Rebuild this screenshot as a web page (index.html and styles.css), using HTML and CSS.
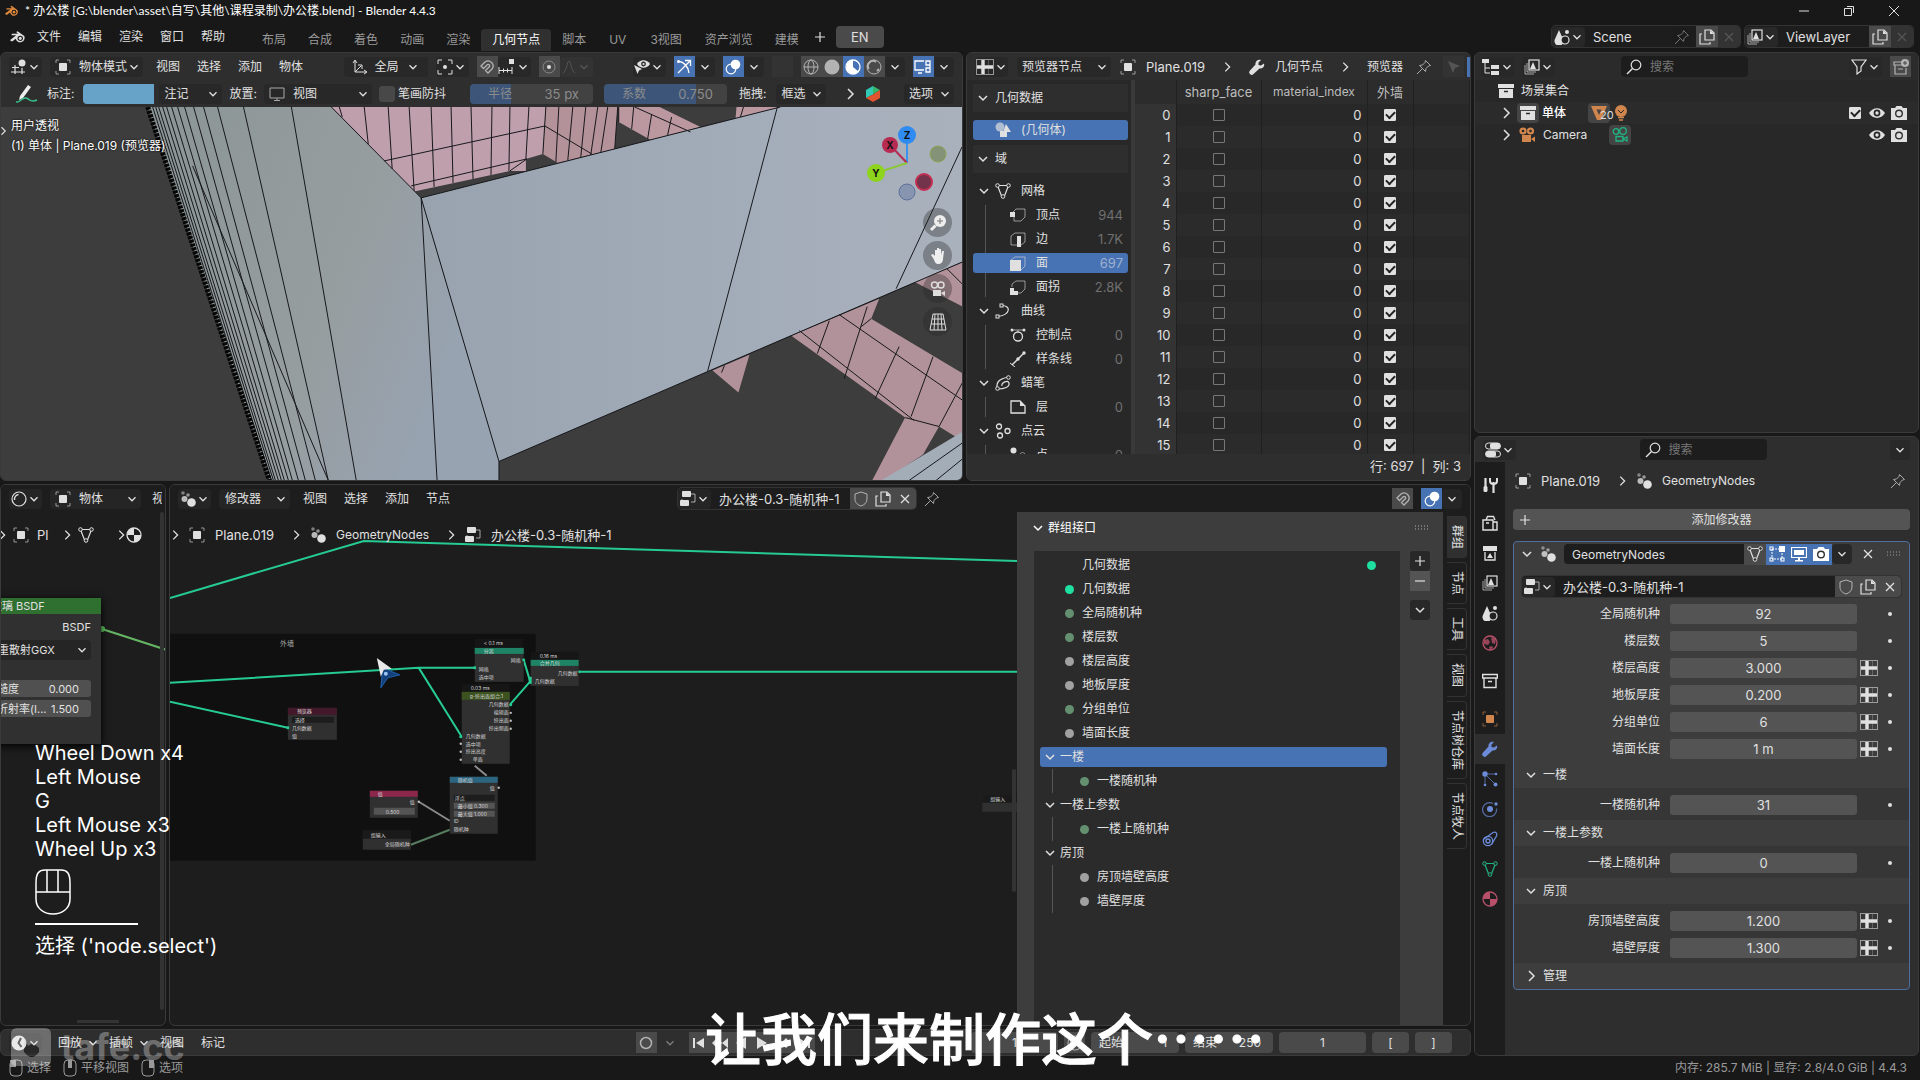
FILE: index.html
```html
<!DOCTYPE html>
<html lang="zh-CN">
<head>
    <meta charset="UTF-8">
    <meta name="viewport" content="width=device-width, initial-scale=1.0">
    <title>办公楼 - Blender 4.4.3</title>
    <link rel="stylesheet" href="styles.css">
</head>
<body>
    <!-- icon sprite -->
    <svg class="sprite" width="0" height="0">
        <symbol id="down" viewBox="0 0 16 16"><path d="M4 6l4 4 4-4" fill="none" stroke="currentColor" stroke-width="1.5"/></symbol>
        <symbol id="right" viewBox="0 0 16 16"><path d="M6 3l5 5-5 5" fill="none" stroke="currentColor" stroke-width="1.5"/></symbol>
        <symbol id="blender" viewBox="0 0 20 16"><path d="M1 11.500L8 6H3V4.500h7L8 2.500l1.500-1L17 7a5 5 0 1 1-9.500 3L3.500 13z" fill="currentColor"/><circle cx="12.500" cy="9.500" r="3" fill="#181818"/><circle cx="12.500" cy="9.500" r="1.700" fill="currentColor"/></symbol>
        <symbol id="object" viewBox="0 0 16 16"><rect x="4" y="4" width="8" height="8" rx="1" fill="currentColor"/><path d="M1 4V1h3M12 1h3v3M15 12v3h-3M4 15H1v-3" fill="none" stroke="currentColor" opacity=".6"/></symbol>
        <symbol id="pin" viewBox="0 0 16 16"><path d="M9.500 1.500l5 5-2 .5-2.500 2.500-.5 3-6-6 3-.500L9 3.500zM6 10l-5 5" fill="none" stroke="currentColor"/></symbol>
        <symbol id="view3d" viewBox="0 0 16 16"><circle cx="11" cy="4" r="3.500" fill="currentColor"/><path d="M4 6v9M11 9v6M1 8.500h7M0 13h14" fill="none" stroke="currentColor" stroke-width="1.200"/></symbol>
        <symbol id="orient" viewBox="0 0 16 16"><path d="M3 2v11h11M1 4l2-3 2 3M12 11l3 2-3 2M3 13l6-6M6 6h4v4" fill="none" stroke="currentColor"/></symbol>
        <symbol id="pivot" viewBox="0 0 16 16"><circle cx="8" cy="8" r="2" fill="currentColor"/><path d="M1 5V1h4M11 1h4v4M15 11v4h-4M5 15H1v-4" fill="none" stroke="currentColor"/></symbol>
        <symbol id="magnet" viewBox="0 0 16 16"><path d="M2 7l4-4a5 5 0 0 1 7 7l-4 4-2.500-2.500 4-4a1.500 1.500 0 0 0-2-2l-4 4z" fill="none" stroke="currentColor" stroke-width="1.300"/></symbol>
        <symbol id="increment" viewBox="0 0 18 16"><path d="M1 8v7M5.500 9.500v4M9.500 9.500v4M14 8v7M1 11.500h13" fill="none" stroke="currentColor"/><rect x="11" y="0" width="5" height="5" fill="currentColor"/></symbol>
        <symbol id="proportional" viewBox="0 0 16 16"><circle cx="8" cy="8" r="6" fill="none" stroke="currentColor" opacity=".4"/><circle cx="8" cy="8" r="2" fill="currentColor"/></symbol>
        <symbol id="falloff" viewBox="0 0 16 16"><path d="M2 14C6 12 6 2 8 2s2 10 6 12" fill="none" stroke="currentColor"/></symbol>
        <symbol id="eye" viewBox="0 0 16 16"><path d="M0 8c4-6.500 12-6.500 16 0-4 6.500-12 6.500-16 0z" fill="currentColor"/><circle cx="8" cy="8" r="3.400" fill="#282828"/><circle cx="8" cy="8" r="1.700" fill="currentColor"/></symbol>
        <symbol id="visible" viewBox="0 0 16 16"><path d="M3 5c3-5 10-5 13 0-3 5-10 5-13 0z" fill="currentColor"/><circle cx="9.500" cy="5" r="2.400" fill="#2d2d2d"/><circle cx="9.500" cy="5" r="1.100" fill="currentColor"/><path d="M0 6l8 4-3 1.500L3.500 15z" fill="currentColor"/></symbol>
        <symbol id="gizmo" viewBox="0 0 16 16"><path d="M2 2c6 1 10 5 11 12M2 14L14 2M9 1.500h5.500V7" fill="none" stroke="currentColor" stroke-width="1.300"/><circle cx="2.500" cy="2.500" r="1.500" fill="currentColor"/></symbol>
        <symbol id="overlay" viewBox="0 0 16 16"><circle cx="6" cy="10" r="4.800" fill="none" stroke="currentColor" stroke-width="1.200"/><circle cx="10.500" cy="5.500" r="4.800" fill="currentColor"/></symbol>
        <symbol id="wire" viewBox="0 0 16 16"><circle cx="8" cy="8" r="7" fill="none" stroke="currentColor"/><ellipse cx="8" cy="8" rx="3" ry="7" fill="none" stroke="currentColor"/><path d="M1 8h14" stroke="currentColor"/></symbol>
        <symbol id="solid" viewBox="0 0 16 16"><circle cx="8" cy="8" r="7.500" fill="currentColor"/></symbol>
        <symbol id="matprev" viewBox="0 0 16 16"><circle cx="8" cy="8" r="7" fill="none" stroke="currentColor" stroke-width="1.300"/><path d="M8 8V1a7 7 0 0 0-4.500 12z M8 8l5.500 4.500A7 7 0 0 1 3.500 13z" fill="currentColor"/></symbol>
        <symbol id="rendered" viewBox="0 0 16 16"><circle cx="8" cy="8" r="7" fill="none" stroke="currentColor"/><path d="M3 10a5 5 0 0 1 7-7M11 12l2-2" fill="none" stroke="currentColor" stroke-width="2"/></symbol>
        <symbol id="scrcam" viewBox="0 0 18 16"><path d="M10 2H1v9h9M4 14h4M12 2h4v4h-4zM12 9h4v4h-4zM16 6v3" fill="none" stroke="currentColor" stroke-width="1.300"/></symbol>
        <symbol id="pencil" viewBox="0 0 24 20"><path d="M5 12L13 1l3 2-8 11-4 2z" fill="#eee"/><path d="M1 18c4 1 6-5 10-4s4 5 11 2" fill="none" stroke="#3ac08c" stroke-width="1.500"/></symbol>
        <symbol id="screen" viewBox="0 0 16 16"><path d="M1 2h14v10H1zM5 14.500h6M8 12v2" fill="none" stroke="currentColor"/></symbol>
        <symbol id="sheet" viewBox="0 0 18 16"><rect x=".5" y=".5" width="17" height="15" fill="none" stroke="currentColor" opacity=".6"/><path d="M1 8h16M7 1v14" stroke="currentColor" stroke-width="3.400"/><path d="M12.500 1v14" stroke="currentColor" opacity=".25"/></symbol>
        <symbol id="wrench" viewBox="0 0 16 16"><path d="M15 4.500l-3 2-2.500-.500L9.500 3.500 12 1C8.500 0 6 2.500 6.500 5.500L1 11.500a2.300 2.300 0 0 0 3.500 3.500L10.500 9.500C13.500 10 16 7.500 15 4.500z" fill="currentColor"/></symbol>
        <symbol id="arrow" viewBox="0 0 16 16"><path d="M2 2l12 5-5 2-2 5z" fill="currentColor"/></symbol>
        <symbol id="geom" viewBox="0 0 16 16"><circle cx="5" cy="5" r="4.500" fill="currentColor" opacity=".7"/><path d="M11 2l5 8h-8z" fill="currentColor"/><rect x="5" y="9" width="7" height="6" fill="currentColor"/></symbol>
        <symbol id="mesh" viewBox="0 0 16 16"><path d="M2.500 2.500h11L9.500 13h-3z" fill="none" stroke="currentColor" stroke-width="1.200"/><g fill="#2a2a2a" stroke="currentColor"><circle cx="2.500" cy="2.500" r="1.800"/><circle cx="13.500" cy="2.500" r="1.800"/><circle cx="8" cy="13.500" r="1.800"/></g></symbol>
        <symbol id="meshobj" viewBox="0 0 16 16"><path d="M0 1h16L10 15H6z" fill="currentColor"/><path d="M5.500 4.500h5L8 10z" fill="#444"/></symbol>
        <symbol id="vert" viewBox="0 0 16 16"><path d="M3 5l3-3h9v8l-4 4H4V9" fill="none" stroke="currentColor" opacity=".6"/><rect x="0" y="5" width="5" height="5" fill="currentColor"/></symbol>
        <symbol id="edge" viewBox="0 0 16 16"><path d="M8 14H1V5l4-3h10v9l-4 3" fill="none" stroke="currentColor" opacity=".6"/><rect x="7" y="5" width="4" height="11" fill="currentColor"/></symbol>
        <symbol id="face" viewBox="0 0 16 16"><path d="M1 5l4-3h10v9l-4 4" fill="none" stroke="currentColor" opacity=".6"/><rect x="0" y="5" width="11" height="11" fill="currentColor"/></symbol>
        <symbol id="corner" viewBox="0 0 16 16"><path d="M2 8V5l4-3h9v8l-4 4H8" fill="none" stroke="currentColor" opacity=".6"/><path d="M0 9h4v3h4v4H0z" fill="currentColor"/></symbol>
        <symbol id="curve" viewBox="0 0 16 16"><path d="M7 2.500c9 0 9 9-4 11" fill="none" stroke="currentColor" stroke-width="1.200"/><g fill="#282828" stroke="currentColor"><rect x="5" y="1" width="3" height="3"/><rect x="1" y="12" width="3" height="3"/></g></symbol>
        <symbol id="ctrl" viewBox="0 0 16 16"><circle cx="8" cy="9.500" r="4.500" fill="none" stroke="currentColor" stroke-width="1.300"/><path d="M1 3h14M8 3v2" stroke="currentColor" opacity=".7"/><circle cx="2" cy="3" r="1.500" fill="currentColor"/><circle cx="14" cy="3" r="1.500" fill="currentColor"/></symbol>
        <symbol id="spline" viewBox="0 0 16 16"><path d="M2 14L14 2" stroke="currentColor" stroke-width="1.300"/><circle cx="14" cy="2" r="1.700" fill="currentColor"/><circle cx="8" cy="8" r="1.700" fill="currentColor"/><path d="M0 12l5 4" stroke="currentColor"/></symbol>
        <symbol id="grease" viewBox="0 0 16 16"><path d="M2 14C1 6 5 4 13 2M3 14c6 0 12-2 11-6s-8 0-7 3" fill="none" stroke="currentColor" stroke-width="1.200"/><circle cx="2.500" cy="13.500" r="1.800" fill="#282828" stroke="currentColor"/><circle cx="13.500" cy="2.500" r="1.800" fill="#282828" stroke="currentColor"/></symbol>
        <symbol id="layer" viewBox="0 0 16 16"><path d="M1 2h9l5 5v7H1z" fill="none" stroke="currentColor" stroke-width="1.300"/><path d="M10 2v5h5z" fill="currentColor"/></symbol>
        <symbol id="cloud" viewBox="0 0 16 16"><g fill="none" stroke="currentColor" stroke-width="1.300"><circle cx="4" cy="3.500" r="2.500"/><circle cx="12.500" cy="8" r="2.500"/><circle cx="5" cy="12.500" r="2.500"/></g></symbol>
        <symbol id="point" viewBox="0 0 16 16"><circle cx="3.500" cy="3.500" r="3" fill="currentColor"/><circle cx="12.500" cy="8" r="2.500" fill="none" stroke="currentColor" opacity=".5"/></symbol>
        <symbol id="scene" viewBox="0 0 16 16"><path d="M5 1l4 9a4.500 4.500 0 1 1-8 0z" fill="currentColor"/><circle cx="11" cy="11" r="4" fill="#222" stroke="currentColor" stroke-width="1.200"/><circle cx="13" cy="3" r="2" fill="currentColor"/></symbol>
        <symbol id="image" viewBox="0 0 16 16"><path d="M3 4v9h9M1 6v9h9" fill="none" stroke="currentColor" opacity=".7"/><rect x="5" y="1" width="10" height="10" fill="none" stroke="currentColor" stroke-width="1.200"/><path d="M6 10l3-7 3 7z" fill="currentColor"/></symbol>
        <symbol id="copy" viewBox="0 0 16 16"><path d="M6 1h6l3 3v7H6zM3 5H1v10h10v-2" fill="none" stroke="currentColor" stroke-width="1.200"/><path d="M11 1v4h4z" fill="currentColor"/></symbol>
        <symbol id="close" viewBox="0 0 16 16"><path d="M4 4l8 8M12 4l-8 8" stroke="currentColor" stroke-width="1.300"/></symbol>
        <symbol id="plus" viewBox="0 0 16 16"><path d="M8 3v10M3 8h10" stroke="currentColor" stroke-width="1.200"/></symbol>
        <symbol id="minus" viewBox="0 0 16 16"><path d="M3 8h10" stroke="currentColor" stroke-width="1.200"/></symbol>
        <symbol id="tree" viewBox="0 0 18 16"><path d="M3 3v11h5M3 9h5" fill="none" stroke="currentColor"/><rect x="0" y="0" width="7" height="4" fill="currentColor"/><rect x="9" y="6" width="8" height="4" fill="currentColor"/><rect x="9" y="12" width="8" height="4" fill="currentColor"/></symbol>
        <symbol id="search" viewBox="0 0 16 16"><circle cx="10" cy="6" r="4.800" fill="none" stroke="currentColor" stroke-width="1.200"/><path d="M6.500 9.500L1 15" stroke="currentColor" stroke-width="1.500"/></symbol>
        <symbol id="funnel" viewBox="0 0 16 16"><path d="M1 1h14l-5 7v4l-4 3V8z" fill="none" stroke="currentColor" stroke-width="1.200"/></symbol>
        <symbol id="collection" viewBox="0 0 16 16"><path d="M0 1h16v4H0zM1 6h14v9H1z" fill="currentColor"/><path d="M6 8.500h4" stroke="#282828" stroke-width="1.500"/></symbol>
        <symbol id="newcoll" viewBox="0 0 16 16"><path d="M9 3H1v3h10M2 6v9h11V9M5 10h5" fill="none" stroke="currentColor" stroke-width="1.200"/><circle cx="12" cy="4" r="4" fill="currentColor"/><path d="M12 2v4M10 4h4" stroke="#444"/></symbol>
        <symbol id="box" viewBox="0 0 16 16"><path d="M.7 1.500h14.600v3.500H.7zM2 5h12v9.500H2zM6 8.500h4" fill="none" stroke="currentColor" stroke-width="1.400"/></symbol>
        <symbol id="cam" viewBox="0 0 16 16"><path d="M0 3h4l1.500-2h5L12 3h4v12H0z" fill="currentColor"/><circle cx="8" cy="8.500" r="4" fill="#333"/><circle cx="8" cy="8.500" r="2.600" fill="currentColor"/></symbol>
        <symbol id="movie" viewBox="0 0 16 16"><circle cx="4" cy="4" r="3.600" fill="currentColor"/><circle cx="11.500" cy="4" r="3.600" fill="currentColor"/><path d="M3 8h9v7H3zM12 12l4-2.500V15z" fill="currentColor"/><circle cx="4" cy="4" r="1.300" fill="#282828"/><circle cx="11.500" cy="4" r="1.300" fill="#282828"/></symbol>
        <symbol id="camdata" viewBox="0 0 16 16"><g fill="none" stroke="currentColor" stroke-width="1.300"><circle cx="4" cy="4.500" r="2.800"/><circle cx="11" cy="4" r="3.300"/><path d="M4 9.500h7V14H4zM11 12l4-2v4z"/></g></symbol>
        <symbol id="bulb" viewBox="0 0 16 16"><circle cx="8" cy="6" r="6" fill="currentColor"/><path d="M5 12.500h6M6 15h4" stroke="currentColor" stroke-width="1.500"/><path d="M5 5l3 3 3-3" fill="none" stroke="#282828"/></symbol>
        <symbol id="props" viewBox="0 0 16 16"><rect x=".5" y="1" width="15" height="6" rx="3" fill="none" stroke="currentColor"/><rect x="5" y="1" width="10" height="6" rx="2" fill="currentColor"/><rect x=".5" y="9" width="15" height="6" rx="3" fill="none" stroke="currentColor"/><rect x="1" y="9" width="10" height="6" rx="2" fill="currentColor"/></symbol>
        <symbol id="gnodes" viewBox="0 0 16 16"><circle cx="3" cy="2" r="1.800" fill="currentColor" opacity=".5"/><circle cx="8" cy="4" r="1.800" fill="currentColor" opacity=".6"/><circle cx="4.500" cy="8" r="3" fill="currentColor" opacity=".8"/><circle cx="11.500" cy="11.500" r="4.300" fill="currentColor"/></symbol>
        <symbol id="nodetree" viewBox="0 0 16 16"><path d="M11 3h4v8h-4M2 8v5" fill="none" stroke="currentColor" opacity=".7"/><rect x="2" y="0" width="9" height="6" rx="1" fill="currentColor"/><rect x="0" y="9" width="9" height="6" rx="1" fill="currentColor"/></symbol>
        <symbol id="shield" viewBox="0 0 16 16"><path d="M8 1l6 2v5c0 4-3 6-6 7-3-1-6-3-6-7V3z" fill="none" stroke="currentColor"/></symbol>
        <symbol id="sphere" viewBox="0 0 16 16"><circle cx="8" cy="8" r="7" fill="none" stroke="currentColor" stroke-width="1.200"/><path d="M3.500 9a5 5 0 0 1 4-5.500" fill="none" stroke="currentColor" stroke-width="1.500"/></symbol>
        <symbol id="material" viewBox="0 0 16 16"><circle cx="8" cy="8" r="7" fill="none" stroke="currentColor" stroke-width="1.300"/><path d="M8 8V1a7 7 0 0 0-7 7zM8 8v7a7 7 0 0 0 7-7z" fill="currentColor"/></symbol>
        <symbol id="tool" viewBox="0 0 16 16"><path d="M3.500 1v9M11.500 5v11" stroke="currentColor" stroke-width="2.200"/><rect x="1.500" y="9" width="4" height="6" rx="1.500" fill="currentColor"/><path d="M8 1v3c0 4 7 4 7 0V1" fill="none" stroke="currentColor" stroke-width="2"/></symbol>
        <symbol id="render" viewBox="0 0 16 16"><path d="M1 5h10v10H1zM11 7h4v8h-4M4 5l1.500-3.500h6L13 5" fill="none" stroke="currentColor" stroke-width="1.400"/><path d="M4 8h3" stroke="currentColor" stroke-width="1.500"/></symbol>
        <symbol id="output" viewBox="0 0 16 16"><path d="M1 1h14v5H1z" fill="currentColor"/><path d="M3 7v8h10V7" fill="none" stroke="currentColor" stroke-width="1.300"/><path d="M5 13l3-5 3 5z" fill="currentColor"/></symbol>
        <symbol id="world" viewBox="0 0 16 16"><circle cx="8" cy="8" r="7" fill="none" stroke="currentColor" stroke-width="1.300"/><path d="M2 5l4-1 2 3-2 3-4-1zM9 2l5 2-1 5-3-1zM7 12l3-1 1 2-3 2z" fill="currentColor" opacity=".8"/></symbol>
        <symbol id="particles" viewBox="0 0 16 16"><circle cx="3" cy="3" r="2.700" fill="currentColor"/><path d="M3 3h11M3 3v11M3 3l11 11" stroke="currentColor" opacity=".7"/><circle cx="14" cy="3" r="1.300" fill="currentColor"/><circle cx="3" cy="14" r="1.300" fill="currentColor"/><circle cx="13.500" cy="13.500" r="2" fill="currentColor"/></symbol>
        <symbol id="physics" viewBox="0 0 16 16"><path d="M11 2.500a7 7 0 1 0 3.500 5" fill="none" stroke="currentColor" opacity=".7" stroke-width="1.300"/><circle cx="8" cy="8" r="3" fill="currentColor"/><circle cx="14" cy="3" r="1.700" fill="currentColor"/></symbol>
        <symbol id="constraint" viewBox="0 0 16 16"><path d="M2 8L11 1.500c3-1 4.500 1 3.500 3.500l-5 8.500" fill="none" stroke="currentColor" stroke-width="1.300"/><circle cx="6" cy="10" r="4.700" fill="none" stroke="currentColor" stroke-width="1.300"/><circle cx="6" cy="10" r="2" fill="none" stroke="currentColor" stroke-width="1.400"/></symbol>
        <symbol id="editmode" viewBox="0 0 16 16"><path d="M3 3h8M3 3v10h10V7" fill="none" stroke="currentColor" stroke-dasharray="2 1"/><rect x="10" y="0" width="6" height="6" fill="currentColor"/><g fill="none" stroke="currentColor"><rect x="1" y="1" width="3" height="3"/><rect x="1" y="12" width="3" height="3"/><rect x="12" y="12" width="3" height="3"/></g></symbol>
        <symbol id="monitor" viewBox="0 0 16 16"><path d="M.5 1.500h15v10H.5z" fill="none" stroke="currentColor" stroke-width="1.200"/><path d="M3 4h10v5H3zM7 12h2v2h3v1.500H4V14h3z" fill="currentColor"/></symbol>
        <symbol id="grip" viewBox="0 0 16 8"><path d="M1 2h14M1 5h14" stroke="currentColor" stroke-width="1.200" stroke-dasharray="1 2"/></symbol>
        <symbol id="clock" viewBox="0 0 16 16"><circle cx="8" cy="8" r="7.500" fill="currentColor"/><path d="M10 3L7.500 8l3 4" fill="none" stroke="#222" stroke-width="2"/></symbol>
        <symbol id="mouse-l" viewBox="0 0 14 18"><rect x="1" y="1" width="12" height="16" rx="4" fill="none" stroke="currentColor"/><path d="M1 1h6v7H1z" fill="currentColor"/></symbol>
        <symbol id="mouse-m" viewBox="0 0 14 18"><rect x="1" y="1" width="12" height="16" rx="4" fill="none" stroke="currentColor"/><path d="M5 1h4v8H5z" fill="currentColor"/></symbol>
        <symbol id="mouse-r" viewBox="0 0 14 18"><rect x="1" y="1" width="12" height="16" rx="4" fill="none" stroke="currentColor"/><path d="M8 1h5v8H8z" fill="currentColor"/></symbol>
    </svg>

    <header class="titlebar">
        <svg class="ic logo"><use href="#blender"/></svg>
        <span class="title">* 办公楼 [G:\blender\asset\自写\其他\课程录制\办公楼.blend] - Blender 4.4.3</span>
        <div class="window-buttons">
            <button aria-label="最小化"><svg viewBox="0 0 12 12"><path d="M1 6h10" stroke="currentColor"/></svg></button>
            <button aria-label="还原"><svg viewBox="0 0 12 12"><path d="M1.500 3.500h7v7h-7zM4 1.500h6.500V8" fill="none" stroke="currentColor"/></svg></button>
            <button aria-label="关闭"><svg viewBox="0 0 12 12"><path d="M1 1l10 10M11 1L1 11" stroke="currentColor"/></svg></button>
        </div>
    </header>

    <nav class="topbar">
        <svg class="ic wide"><use href="#blender"/></svg>
        <div class="menus">
            <button>文件</button><button>编辑</button><button>渲染</button><button>窗口</button><button>帮助</button>
        </div>
        <div class="tabs">
            <button>布局</button><button>合成</button><button>着色</button><button>动画</button><button>渲染</button>
            <button class="active">几何节点</button><button>脚本</button><button class="lat">UV</button><button class="lat">3视图</button>
            <button>资产浏览</button><button>建模</button>
        </div>
        <button class="flat add-tab" aria-label="添加工作区"><svg class="ic"><use href="#plus"/></svg></button>
        <button class="lang lat">EN</button>
        <div class="datablocks">
            <div class="datablock">
                <button class="drop"><svg class="ic"><use href="#scene"/></svg><svg class="chev"><use href="#down"/></svg></button>
                <input class="lat" type="text" value="Scene" aria-label="场景">
                <svg class="ic dim"><use href="#pin"/></svg>
                <button class="tool"><svg class="ic"><use href="#copy"/></svg></button>
                <button class="tool off"><svg class="ic"><use href="#close"/></svg></button>
            </div>
            <div class="datablock layer">
                <button class="drop"><svg class="ic"><use href="#image"/></svg><svg class="chev"><use href="#down"/></svg></button>
                <input class="lat" type="text" value="ViewLayer" aria-label="视图层">
                <button class="tool"><svg class="ic"><use href="#copy"/></svg></button>
                <button class="tool off"><svg class="ic"><use href="#close"/></svg></button>
            </div>
        </div>
    </nav>

    <main class="workspace">
        <div class="column-main">
            <div class="row-top">
                <!-- 3D viewport -->
                <section class="area viewport">
                    <div class="bar spread">
                        <div class="group">
                            <button class="drop"><svg class="ic"><use href="#view3d"/></svg><svg class="chev"><use href="#down"/></svg></button>
                            <label class="select mode"><svg class="ic"><use href="#object"/></svg><select aria-label="模式"><option>物体模式</option></select><svg class="chev"><use href="#down"/></svg></label>
                            <div class="menus"><button>视图</button><button>选择</button><button>添加</button><button>物体</button></div>
                        </div>
                        <div class="group tight">
                            <button class="drop wide-drop"><svg class="ic"><use href="#orient"/></svg>全局<svg class="chev"><use href="#down"/></svg></button>
                            <button class="drop"><svg class="ic"><use href="#pivot"/></svg><svg class="chev"><use href="#down"/></svg></button>
                            <div class="joined">
                                <button class="tool"><svg class="ic soft"><use href="#magnet"/></svg></button>
                                <button class="drop"><svg class="ic wide"><use href="#increment"/></svg><svg class="chev"><use href="#down"/></svg></button>
                            </div>
                            <div class="joined">
                                <button class="tool"><svg class="ic"><use href="#proportional"/></svg></button>
                                <button class="drop off"><svg class="ic"><use href="#falloff"/></svg><svg class="chev"><use href="#down"/></svg></button>
                            </div>
                        </div>
                        <div class="group tight">
                            <button class="drop"><svg class="ic"><use href="#visible"/></svg><svg class="chev"><use href="#down"/></svg></button>
                            <div class="joined"><button class="tool on"><svg class="ic"><use href="#gizmo"/></svg></button><button class="drop slim"><svg class="chev"><use href="#down"/></svg></button></div>
                            <div class="joined"><button class="tool on"><svg class="ic"><use href="#overlay"/></svg></button><button class="drop slim"><svg class="chev"><use href="#down"/></svg></button></div>
                            <button class="tool off" aria-label="透视模式"></button>
                            <div class="joined">
                                <button class="tool"><svg class="ic soft"><use href="#wire"/></svg></button>
                                <button class="tool"><svg class="ic soft"><use href="#solid"/></svg></button>
                                <button class="tool on"><svg class="ic"><use href="#matprev"/></svg></button>
                                <button class="tool"><svg class="ic soft"><use href="#rendered"/></svg></button>
                                <button class="drop slim"><svg class="chev"><use href="#down"/></svg></button>
                            </div>
                            <div class="joined"><button class="tool on"><svg class="ic wide"><use href="#scrcam"/></svg></button><button class="drop slim"><svg class="chev"><use href="#down"/></svg></button></div>
                        </div>
                    </div>
                    <div class="bar settings">
                        <svg class="pencil"><use href="#pencil"/></svg>
                        <label for="noteColor">标注:</label>
                        <button class="swatch" id="noteColor" aria-label="颜色"></button>
                        <label class="select note"><select aria-label="注记"><option>注记</option></select><svg class="chev"><use href="#down"/></svg></label>
                        <label for="placement">放置:</label>
                        <label class="select place"><svg class="ic soft"><use href="#screen"/></svg><select id="placement"><option>视图</option></select><svg class="chev"><use href="#down"/></svg></label>
                        <label class="check-label"><input type="checkbox" class="box-check">笔画防抖</label>
                        <label class="slider radius"><span>半径</span><input class="lat" type="text" value="35 px"></label>
                        <label class="slider factor"><span>系数</span><input class="lat" type="text" value="0.750"></label>
                        <label for="drag">拖拽:</label>
                        <label class="select drag"><select id="drag"><option>框选</option></select><svg class="chev"><use href="#down"/></svg></label>
                        <svg class="ic push"><use href="#right"/></svg>
                        <svg class="ic" viewBox="0 0 16 16"><path d="M8 0l7 4-7 4.500z" fill="#35b56a"/><path d="M8 0L1 4v8l7-3.500z" fill="#2fc9b5"/><path d="M1 12l7 4 7-4V4L8 8.500z" fill="#e0552f"/></svg>
                        <label class="select options"><select aria-label="选项"><option>选项</option></select><svg class="chev"><use href="#down"/></svg></label>
                    </div>
                    <div class="scene">
                        <svg class="scene-art" viewBox="0 0 963 374" preserveAspectRatio="none">
                            <defs>
                                <linearGradient id="side" x1="0" x2="1" y1="0" y2=".4"><stop offset="0" stop-color="#8b9596"/><stop offset=".6" stop-color="#969d9e"/><stop offset="1" stop-color="#98a3b2"/></linearGradient>
                                <linearGradient id="front" x1="0" x2="1"><stop offset="0" stop-color="#98a3af"/><stop offset=".5" stop-color="#a1abb8"/><stop offset="1" stop-color="#a9b1bc"/></linearGradient>
                            </defs>
                            <rect width="963" height="374" fill="#3d3d3d"/>
                            <path d="M331 0H546L543 47 526 52V64L510 64 413 85z" fill="#bf9fac"/>
                            <path d="M546 0H618L615 42 558 56 543 47z" fill="#b49299"/>
                            <path d="M619 0h41l41 20-50 13-32-18zM737 0h46l-47 12z" fill="#bb98a0"/>
                            <path d="M792 229L880 192 872 212 964 267V335L940 320 906 311zM906 311L940 320 924 348 885 374H873zM713 264L750 248 739 286zM915 175L964 155V200z" fill="#b2929a"/>
                            <path d="M147 0H331L421 91 499 355V374H269z" fill="url(#side)"/>
                            <path d="M421 91L781 0H963V155L708 265 499 355z" fill="url(#front)"/>
                            <path d="M882 374L964 325V374z" fill="#a3adb8"/>
                            <g fill="none" stroke="#16181b" stroke-width="1">
                                <path d="M331 0L421 91 499 355V374M421 91L781 0M421 91L437 374M778 0L708 265M963 40L897 182M499 355L708 265 964 155"/>
                                <path d="M291 0L356 374M243 0L328 374M217 0L315 374M203 0L305 374M193 0L298 374M184 0L292 374M177 0L288 374M171 0L284 374M166 0L281 374M162 0L278 374M158 0L275 374M155 0L273 374M152 0L271 374M192 59L328 374"/>
                                <path d="M339 0L342 10M364 0L368 37M388 0L392 62M409 0L414 84M431 0L434 80M451 0L453 76M471 0L473 72M492 0L491 68M510 0L509 64M529 0L526 52M546 0L543 47M559 0L556 55M573 0L568 53M586 0L581 50M598 0L591 48M608 0L601 46M618 0L615 42"/>
                                <path d="M384 54L545 19 592 47M411 79L527 52 510 64M635 0L691 25M619 0L619 15M634 0L632 22M652 7L648 32M672 10L668 28M744 0L741 10"/>
                                <path d="M800 224L915 314M840 208L964 294M830 214L818 247M868 200L845 272M900 240L876 292M934 250L912 310M964 275L940 320M872 212L862 220M906 311L940 320M725 259L722 266M948 162L964 178M910 374L964 336M937 374L964 352"/>
                            </g>
                            <path d="M147 0L269 374" stroke="#060606" stroke-width="5" stroke-dasharray="3 1"/>
                        </svg>
                        <p class="view-info">用户透视<br>(1) 单体 | Plane.019 (预览器)</p>
                        <svg class="edge-mark"><use href="#right"/></svg>
                        <div class="nav-gizmo">
                            <svg width="100" height="90" viewBox="860 15 100 90">
                                <path d="M908 55V27" stroke="#3b93f0" stroke-width="2"/><path d="M908 55L891 37" stroke="#b72b52" stroke-width="2"/><path d="M908 55L877 65" stroke="#8cc63b" stroke-width="2"/>
                                <circle cx="908" cy="27" r="9" fill="#2f8bf0"/><circle cx="891" cy="37" r="8" fill="#b72b52"/><circle cx="877" cy="65" r="9" fill="#8ed31c"/>
                                <circle cx="939" cy="46" r="8" fill="#849377" stroke="#8aa655"/><circle cx="925" cy="74" r="8" fill="#73334a" stroke="#c32e52" stroke-width="2"/><circle cx="908" cy="84" r="8" fill="#8795b0" stroke="#5e719c"/>
                                <g font-size="10" font-weight="700" text-anchor="middle" fill="#111"><text x="908" y="31">Z</text><text x="891" y="41">X</text><text x="877" y="69">Y</text></g>
                            </svg>
                        </div>
                        <div class="nav-tools">
                            <button aria-label="缩放"><svg viewBox="0 0 20 20"><circle cx="12" cy="8" r="6" fill="#eee"/><path d="M7.500 12.500L3 17" stroke="#eee" stroke-width="3"/><path d="M9 8h6M12 5v6" stroke="#777"/></svg></button>
                            <button aria-label="平移"><svg viewBox="0 0 20 20"><path d="M5 12L3 9l2-1 2 2V4h2v5V2h2v7V3h2v6l1-4h2l-1 8c0 3-2 5-5 5s-3-3-5-6z" fill="#eee"/></svg></button>
                            <button aria-label="摄像机"><svg viewBox="0 0 20 20"><circle cx="6.500" cy="6" r="3" fill="none" stroke="#ddd" stroke-width="1.500"/><circle cx="13" cy="6" r="3" fill="none" stroke="#ddd" stroke-width="1.500"/><path d="M5 11h8v6H5zM13 14l4-2v5z" fill="#ddd"/></svg></button>
                            <button aria-label="正交"><svg viewBox="0 0 20 20"><path d="M5 2h10l3 16H2zM10 2v16M7 2L6 18M13 2l1 16M4 7h12M3 12h14" fill="none" stroke="#ddd"/></svg></button>
                        </div>
                    </div>
                </section>

                <!-- spreadsheet -->
                <section class="area spreadsheet">
                    <div class="bar">
                        <button class="drop"><svg class="ic wide"><use href="#sheet"/></svg><svg class="chev"><use href="#down"/></svg></button>
                        <label class="select viewer-select"><select aria-label="显示"><option>预览器节点</option></select><svg class="chev"><use href="#down"/></svg></label>
                        <div class="crumbs">
                            <svg class="ic"><use href="#object"/></svg><span class="lat">Plane.019</span>
                            <svg class="sep"><use href="#right"/></svg>
                            <svg class="ic"><use href="#wrench"/></svg><span>几何节点</span>
                            <svg class="sep"><use href="#right"/></svg><span>预览器</span>
                            <svg class="ic soft"><use href="#pin"/></svg>
                        </div>
                        <button class="tool off push"><svg class="ic"><use href="#arrow"/></svg></button>
                        <i class="clipped-toggle"></i>
                    </div>
                    <div class="sheet-body">
                        <div class="dataset">
                            <button class="panel-title"><svg class="ic"><use href="#down"/></svg>几何数据</button>
                            <button class="tree-item selected root"><svg class="ic"><use href="#geom"/></svg>(几何体)</button>
                            <button class="panel-title second"><svg class="ic"><use href="#down"/></svg>域</button>
                            <div class="domain-tree">
                                <button class="tree-head"><svg class="ic"><use href="#down"/></svg><svg class="ic"><use href="#mesh"/></svg>网格</button>
                                <div class="branch">
                                    <button class="tree-item"><svg class="ic"><use href="#vert"/></svg>顶点<span class="lat">944</span></button>
                                    <button class="tree-item"><svg class="ic"><use href="#edge"/></svg>边<span class="lat">1.7K</span></button>
                                    <button class="tree-item selected"><svg class="ic"><use href="#face"/></svg>面<span class="lat">697</span></button>
                                    <button class="tree-item"><svg class="ic"><use href="#corner"/></svg>面拐<span class="lat">2.8K</span></button>
                                </div>
                                <button class="tree-head"><svg class="ic"><use href="#down"/></svg><svg class="ic"><use href="#curve"/></svg>曲线</button>
                                <div class="branch">
                                    <button class="tree-item"><svg class="ic"><use href="#ctrl"/></svg>控制点<span class="lat">0</span></button>
                                    <button class="tree-item"><svg class="ic"><use href="#spline"/></svg>样条线<span class="lat">0</span></button>
                                </div>
                                <button class="tree-head"><svg class="ic"><use href="#down"/></svg><svg class="ic"><use href="#grease"/></svg>蜡笔</button>
                                <div class="branch">
                                    <button class="tree-item"><svg class="ic"><use href="#layer"/></svg>层<span class="lat">0</span></button>
                                </div>
                                <button class="tree-head"><svg class="ic"><use href="#down"/></svg><svg class="ic"><use href="#cloud"/></svg>点云</button>
                                <div class="branch">
                                    <button class="tree-item"><svg class="ic"><use href="#point"/></svg>点<span class="lat">0</span></button>
                                </div>
                            </div>
                        </div>
                        <div class="table-wrap">
                            <table class="lat">
                                <thead><tr><th class="col-index"></th><th class="col-sharp">sharp_face</th><th class="col-mat">material_index</th><th class="col-wall">外墙</th><th></th></tr></thead>
                                <tbody id="sheetRows"></tbody>
                            </table>
                        </div>
                    </div>
                    <div class="sheet-footer lat">行: 697 &nbsp;|&nbsp; 列: 3</div>
                </section>
            </div>

            <div class="row-nodes">
                <!-- shader editor -->
                <section class="area shader">
                    <div class="bar">
                        <button class="drop"><svg class="ic"><use href="#sphere"/></svg><svg class="chev"><use href="#down"/></svg></button>
                        <label class="select shader-type"><svg class="ic"><use href="#object"/></svg><select aria-label="着色器类型"><option>物体</option></select><svg class="chev"><use href="#down"/></svg></label>
                        <div class="menus"><button>视图</button></div>
                    </div>
                    <div class="shader-canvas">
                        <div class="crumbs">
                            <svg class="sep"><use href="#right"/></svg><svg class="ic"><use href="#object"/></svg><span class="lat">Pl</span>
                            <svg class="sep"><use href="#right"/></svg><svg class="ic"><use href="#mesh"/></svg>
                            <svg class="sep last"><use href="#right"/></svg><svg class="ic"><use href="#material"/></svg>
                        </div>
                        <svg class="links"><path d="M101 117L166 138" stroke="#65b564" stroke-width="2"/><circle cx="101" cy="117" r="3" fill="#63d163"/></svg>
                        <div class="bsdf-node">
                            <div class="node-title">玻璃 BSDF</div>
                            <div class="node-out">BSDF</div>
                            <label class="select"><select aria-label="分布"><option>多重散射GGX</option></select><svg class="chev"><use href="#down"/></svg></label>
                            <label class="node-field"><span>糙度</span><input type="text" value="0.000"></label>
                            <label class="node-field"><span>折射率(I...</span><input type="text" value="1.500"></label>
                        </div>
                        <i class="hscroll"></i>
                        <i class="vscroll"></i>
                    </div>
                </section>

                <!-- geometry node editor -->
                <section class="area nodes">
                    <div class="bar">
                        <button class="drop"><svg class="ic"><use href="#gnodes"/></svg><svg class="chev"><use href="#down"/></svg></button>
                        <label class="select tree-type"><select aria-label="节点树类型"><option>修改器</option></select><svg class="chev"><use href="#down"/></svg></label>
                        <div class="menus"><button>视图</button><button>选择</button><button>添加</button><button>节点</button></div>
                        <div class="datablock tree-block">
                            <button class="drop"><svg class="ic"><use href="#nodetree"/></svg><svg class="chev"><use href="#down"/></svg></button>
                            <input class="lat" type="text" value="办公楼-0.3-随机种-1" aria-label="节点组">
                            <button class="tool"><svg class="ic soft"><use href="#shield"/></svg></button>
                            <button class="tool"><svg class="ic"><use href="#copy"/></svg></button>
                            <button class="tool"><svg class="ic"><use href="#close"/></svg></button>
                        </div>
                        <svg class="ic soft"><use href="#pin"/></svg>
                        <button class="tool push"><svg class="ic soft"><use href="#magnet"/></svg></button>
                        <div class="joined"><button class="tool on"><svg class="ic"><use href="#overlay"/></svg></button><button class="drop slim"><svg class="chev"><use href="#down"/></svg></button></div>
                    </div>
                    <div class="nodes-body">
                        <div class="node-canvas">
                            <svg class="graph" viewBox="171 512 848 513" preserveAspectRatio="xMinYMin slice">
                                <rect x="171" y="634" width="366" height="227" fill="#101010"/>
                                <text x="281" y="646" font-size="7" fill="#aaa">外墙</text>
                                <g fill="none" stroke="#26cb94" stroke-width="2">
                                    <path d="M171 598L365 541 1019 561M171 683L420 668H476M420 668L463 737M171 702L289 728M582 672H1019M525 660L531 680M511 705L532 681"/>
                                </g>
                                <path d="M476 766L488 776M420 802L451 821" stroke="#8a8a8a" stroke-width="2"/><path d="M412 845L451 830" stroke="#567c5f" stroke-width="2"/>
                                <!-- timings -->
                                <g fill="#161616"><rect x="476" y="639" width="48" height="8"/><rect x="532" y="652" width="48" height="8"/><rect x="463" y="684" width="48" height="8"/></g>
                                <g fill="#303030">
                                    <rect x="289" y="708" width="49" height="32"/><rect x="476" y="648" width="49" height="34"/><rect x="532" y="660" width="48" height="26"/>
                                    <rect x="463" y="692" width="48" height="72"/><rect x="451" y="777" width="48" height="57"/><rect x="371" y="791" width="48" height="27"/><rect x="364" y="831" width="48" height="19"/><rect x="984" y="795" width="35" height="17"/>
                                </g>
                                <rect x="289" y="708" width="49" height="7" fill="#43182a"/><rect x="476" y="648" width="49" height="6" fill="#1f8465"/><rect x="532" y="660" width="48" height="6" fill="#1f8465"/>
                                <rect x="463" y="692" width="48" height="8" fill="#3c521f"/><rect x="451" y="777" width="48" height="6" fill="#2b6580"/><rect x="371" y="791" width="48" height="6" fill="#8c264b"/><path d="M364 831h48v8h-48zM984 795h35v8h-35z" fill="#1a1a1a"/>
                                <g fill="#1d1d1d"><rect x="293" y="717" width="42" height="6"/><rect x="455" y="795" width="41" height="6"/></g>
                                <g fill="#545454"><rect x="455" y="803" width="41" height="6"/><rect x="455" y="811" width="41" height="6"/><rect x="375" y="808" width="41" height="7"/></g>
                                <g font-size="5" fill="#d5d5d5">
                                    <text x="298" y="713">预览器</text><text x="296" y="722">选择</text><text x="293" y="730">几何数据</text><text x="293" y="738">值</text>
                                    <text x="485" y="645">&lt; 0.1 ms</text><text x="485" y="653">分离</text><text x="512" y="662">网格</text><text x="480" y="671">网格</text><text x="480" y="679">选中项</text>
                                    <text x="541" y="658">0.16 ms</text><text x="541" y="665">合并几何</text><text x="559" y="675">几何数据</text><text x="536" y="683">几何数据</text>
                                    <text x="472" y="690">0.03 ms</text><text x="471" y="698">g-挤出面组合.1</text><text x="490" y="706">几何数据</text><text x="495" y="714">编辑面</text><text x="495" y="722">挤出面</text><text x="490" y="730">挤出侧面</text><text x="467" y="738">几何数据</text><text x="467" y="746">选中项</text><text x="467" y="753">挤出高度</text><text x="474" y="761">单面</text>
                                    <text x="459" y="782">随机值</text><text x="491" y="790">值</text><text x="456" y="800">浮点</text><text x="459" y="808">最小值 0.300</text><text x="459" y="816">最大值 1.000</text><text x="455" y="823">ID</text><text x="455" y="831">随机种</text>
                                    <text x="379" y="796">值</text><text x="411" y="804">值</text><text x="387" y="814">0.500</text><text x="372" y="837">组输入</text><text x="386" y="846">全局随机种</text><text x="992" y="801">组输入</text>
                                </g>
                                <g fill="#26cb94"><circle cx="289" cy="728" r="1.500"/><circle cx="476" cy="668" r="1.500"/><circle cx="525" cy="660" r="1.500"/><circle cx="581" cy="672" r="1.500"/><circle cx="462" cy="737" r="1.500"/><circle cx="512" cy="705" r="1.500"/><rect x="530" y="677" width="3" height="7"/></g>
                                <g fill="#bbb"><circle cx="512" cy="713" r="1.200"/><circle cx="512" cy="721" r="1.200"/><circle cx="512" cy="729" r="1.200"/><circle cx="462" cy="744" r="1.200"/><circle cx="462" cy="752" r="1.200"/><circle cx="462" cy="760" r="1.200"/><circle cx="420" cy="802" r="1.200"/><circle cx="500" cy="788" r="1.200"/></g>
                                <!-- tool pointer -->
                                <path d="M384 668l17 7-12 3-7 10z" fill="#16407c" stroke="#1d5fae"/><path d="M378 658l15 11-8 1-3 7z" fill="#e8e8e8"/><circle cx="387" cy="674" r="2" fill="#9bc5f5"/>
                            </svg>
                            <div class="crumbs">
                                <svg class="sep"><use href="#right"/></svg>
                                <svg class="ic"><use href="#object"/></svg><span class="lat">Plane.019</span><svg class="sep"><use href="#right"/></svg>
                                <svg class="ic"><use href="#gnodes"/></svg><span>GeometryNodes</span><svg class="sep"><use href="#right"/></svg>
                                <svg class="ic"><use href="#nodetree"/></svg><span class="lat">办公楼-0.3-随机种-1</span>
                            </div>
                            <i class="vscroll mid"></i>
                        </div>
                        <aside class="interface">
                            <div class="interface-title"><svg class="ic"><use href="#down"/></svg>群组接口<svg class="ic grip"><use href="#grip"/></svg></div>
                            <div class="interface-body">
                                <ul class="sockets">
                                    <li>几何数据<i class="dot geo end"></i></li>
                                    <li><i class="dot geo"></i>几何数据</li>
                                    <li><i class="dot int"></i>全局随机种</li>
                                    <li><i class="dot int"></i>楼层数</li>
                                    <li><i class="dot"></i>楼层高度</li>
                                    <li><i class="dot"></i>地板厚度</li>
                                    <li><i class="dot int"></i>分组单位</li>
                                    <li><i class="dot"></i>墙面长度</li>
                                    <li class="folder selected"><svg class="ic"><use href="#down"/></svg>一楼</li>
                                    <li class="child"><i class="dot int"></i>一楼随机种</li>
                                    <li class="folder"><svg class="ic"><use href="#down"/></svg>一楼上参数</li>
                                    <li class="child"><i class="dot int"></i>一楼上随机种</li>
                                    <li class="folder"><svg class="ic"><use href="#down"/></svg>房顶</li>
                                    <li class="child"><i class="dot"></i>房顶墙壁高度</li>
                                    <li class="child"><i class="dot"></i>墙壁厚度</li>
                                </ul>
                                <div class="list-buttons">
                                    <button class="dark" aria-label="添加"><svg class="ic"><use href="#plus"/></svg></button>
                                    <button aria-label="移除"><svg class="ic"><use href="#minus"/></svg></button>
                                    <button class="dark more" aria-label="更多"><svg class="ic"><use href="#down"/></svg></button>
                                </div>
                            </div>
                        </aside>
                        <div class="side-tabs">
                            <button class="active">群组</button><button>节点</button><button>工具</button><button>视图</button><button>节点树仓库</button><button>节点牧人</button>
                        </div>
                    </div>
                </section>
            </div>

            <!-- timeline -->
            <section class="area timeline">
                <div class="group">
                    <button class="drop"><svg class="ic"><use href="#clock"/></svg><svg class="chev"><use href="#down"/></svg></button>
                    <button class="flat">回放<svg class="chev"><use href="#down"/></svg></button>
                    <button class="flat">插帧<svg class="chev"><use href="#down"/></svg></button>
                    <div class="menus"><button>视图</button><button>标记</button></div>
                </div>
                <div class="playback">
                    <button class="tool" aria-label="自动插帧"><svg class="ic soft" viewBox="0 0 16 16"><circle cx="8" cy="8" r="5.500" fill="none" stroke="currentColor" stroke-width="1.500"/></svg></button>
                    <svg class="chev dim"><use href="#down"/></svg>
                    <div class="transport">
                        <button class="tool" aria-label="首帧"><svg class="ic" viewBox="0 0 16 16"><path d="M3 3v10" stroke="currentColor" stroke-width="2"/><path d="M13 3v10L5 8z" fill="currentColor"/></svg></button>
                        <button class="tool" aria-label="上一关键帧"><svg class="ic" viewBox="0 0 16 16"><path d="M5 3l5 5-5 5-5-5zM16 3v10l-6-5z" fill="currentColor"/></svg></button>
                        <button class="tool" aria-label="倒放"><svg class="ic" viewBox="0 0 16 16"><path d="M13 2v12L3 8z" fill="currentColor"/></svg></button>
                        <button class="tool" aria-label="播放"><svg class="ic" viewBox="0 0 16 16"><path d="M3 2v12l10-6z" fill="currentColor"/></svg></button>
                        <button class="tool" aria-label="下一关键帧"><svg class="ic" viewBox="0 0 16 16"><path d="M11 3l5 5-5 5-5-5zM0 3v10l6-5z" fill="currentColor"/></svg></button>
                        <button class="tool" aria-label="末帧"><svg class="ic" viewBox="0 0 16 16"><path d="M13 3v10" stroke="currentColor" stroke-width="2"/><path d="M3 3v10l8-5z" fill="currentColor"/></svg></button>
                    </div>
                    <input class="field current push" type="text" value="1" aria-label="当前帧">
                    <button class="tool" aria-label="预览范围"><svg class="ic soft"><use href="#sphere"/></svg></button>
                    <label class="field range">起始<input type="text" value="1"></label>
                    <label class="field range end">结束<input type="text" value="250"></label>
                    <input class="field current" type="text" value="1" aria-label="帧">
                    <button class="field bracket">[</button>
                    <button class="field bracket">]</button>
                </div>
            </section>
        </div>

        <div class="column-side">
            <!-- outliner -->
            <section class="area outliner">
                <div class="bar">
                    <button class="drop"><svg class="ic wide"><use href="#tree"/></svg><svg class="chev"><use href="#down"/></svg></button>
                    <button class="drop"><svg class="ic"><use href="#image"/></svg><svg class="chev"><use href="#down"/></svg></button>
                    <label class="search"><svg class="ic"><use href="#search"/></svg><input type="search" placeholder="搜索"></label>
                    <button class="drop"><svg class="ic"><use href="#funnel"/></svg><svg class="chev"><use href="#down"/></svg></button>
                    <button class="tool" aria-label="新建集合"><svg class="ic soft"><use href="#newcoll"/></svg></button>
                </div>
                <ul class="outliner-rows">
                    <li class="top"><svg class="ic"><use href="#collection"/></svg>场景集合</li>
                    <li class="odd">
                        <svg class="ic twist"><use href="#right"/></svg><span class="badge"><svg class="ic"><use href="#collection"/></svg></span><b>单体</b>
                        <span class="badge orange first"><svg class="ic"><use href="#meshobj"/></svg><em class="lat">20</em></span><svg class="ic orange"><use href="#bulb"/></svg>
                        <span class="toggles"><input type="checkbox" checked aria-label="启用单体"><svg class="ic"><use href="#eye"/></svg><svg class="ic"><use href="#cam"/></svg></span>
                    </li>
                    <li>
                        <svg class="ic twist"><use href="#right"/></svg><svg class="ic orange obj"><use href="#movie"/></svg><span>Camera</span>
                        <span class="badge green"><svg class="ic"><use href="#camdata"/></svg></span>
                        <span class="toggles"><svg class="ic"><use href="#eye"/></svg><svg class="ic"><use href="#cam"/></svg></span>
                    </li>
                </ul>
            </section>

            <!-- properties -->
            <section class="area properties">
                <div class="bar">
                    <button class="drop"><svg class="ic"><use href="#props"/></svg><svg class="chev"><use href="#down"/></svg></button>
                    <label class="search"><svg class="ic"><use href="#search"/></svg><input type="search" placeholder="搜索"></label>
                    <button class="drop slim"><svg class="chev"><use href="#down"/></svg></button>
                </div>
                <div class="props-body">
                    <nav class="prop-tabs">
                        <button class="gap"><svg class="ic"><use href="#tool"/></svg></button>
                        <button><svg class="ic"><use href="#render"/></svg></button>
                        <button><svg class="ic"><use href="#output"/></svg></button>
                        <button><svg class="ic"><use href="#image"/></svg></button>
                        <button><svg class="ic"><use href="#scene"/></svg></button>
                        <button class="gap red"><svg class="ic"><use href="#world"/></svg></button>
                        <button class="gap"><svg class="ic"><use href="#box"/></svg></button>
                        <button class="orange"><svg class="ic"><use href="#object"/></svg></button>
                        <button class="blue active"><svg class="ic"><use href="#wrench"/></svg></button>
                        <button class="blue"><svg class="ic"><use href="#particles"/></svg></button>
                        <button class="blue"><svg class="ic"><use href="#physics"/></svg></button>
                        <button class="blue"><svg class="ic"><use href="#constraint"/></svg></button>
                        <button class="green"><svg class="ic"><use href="#mesh"/></svg></button>
                        <button class="red"><svg class="ic"><use href="#material"/></svg></button>
                    </nav>
                    <div class="prop-main">
                        <div class="crumbs">
                            <svg class="ic"><use href="#object"/></svg><span class="lat">Plane.019</span><svg class="sep"><use href="#right"/></svg>
                            <svg class="ic"><use href="#gnodes"/></svg><span>GeometryNodes</span>
                            <svg class="ic soft push"><use href="#pin"/></svg>
                        </div>
                        <button class="add-modifier"><svg class="ic"><use href="#plus"/></svg><span>添加修改器</span></button>
                        <div class="modifier">
                            <div class="modifier-head">
                                <svg class="ic"><use href="#down"/></svg><svg class="ic"><use href="#gnodes"/></svg>
                                <input type="text" value="GeometryNodes" aria-label="修改器名称">
                                <div class="joined">
                                    <button class="tool"><svg class="ic"><use href="#mesh"/></svg></button>
                                    <button class="tool on"><svg class="ic"><use href="#editmode"/></svg></button>
                                    <button class="tool on"><svg class="ic"><use href="#monitor"/></svg></button>
                                    <button class="tool on"><svg class="ic"><use href="#cam"/></svg></button>
                                    <button class="drop slim"><svg class="chev"><use href="#down"/></svg></button>
                                </div>
                                <svg class="ic"><use href="#close"/></svg><svg class="ic grip"><use href="#grip"/></svg>
                            </div>
                            <div class="datablock group-block">
                                <button class="drop"><svg class="ic"><use href="#nodetree"/></svg><svg class="chev"><use href="#down"/></svg></button>
                                <input class="lat" type="text" value="办公楼-0.3-随机种-1" aria-label="节点组">
                                <button class="tool"><svg class="ic soft"><use href="#shield"/></svg></button>
                                <button class="tool"><svg class="ic"><use href="#copy"/></svg></button>
                                <button class="tool"><svg class="ic"><use href="#close"/></svg></button>
                            </div>
                            <div class="prop-rows">
                                <div class="prop"><label for="p1">全局随机种</label><input id="p1" type="text" value="92"><span></span><i></i></div>
                                <div class="prop"><label for="p2">楼层数</label><input id="p2" type="text" value="5"><span></span><i></i></div>
                                <div class="prop"><label for="p3">楼层高度</label><input id="p3" type="text" value="3.000"><svg class="ic wide"><use href="#sheet"/></svg><i></i></div>
                                <div class="prop"><label for="p4">地板厚度</label><input id="p4" type="text" value="0.200"><svg class="ic wide"><use href="#sheet"/></svg><i></i></div>
                                <div class="prop"><label for="p5">分组单位</label><input id="p5" type="text" value="6"><svg class="ic wide"><use href="#sheet"/></svg><i></i></div>
                                <div class="prop"><label for="p6">墙面长度</label><input id="p6" type="text" value="1 m"><svg class="ic wide"><use href="#sheet"/></svg><i></i></div>
                            </div>
                            <button class="sub-title"><svg class="ic"><use href="#down"/></svg>一楼</button>
                            <div class="sub-body">
                                <div class="prop"><label for="p7">一楼随机种</label><input id="p7" type="text" value="31"><span></span><i></i></div>
                            </div>
                            <button class="sub-title"><svg class="ic"><use href="#down"/></svg>一楼上参数</button>
                            <div class="sub-body">
                                <div class="prop"><label for="p8">一楼上随机种</label><input id="p8" type="text" value="0"><span></span><i></i></div>
                            </div>
                            <button class="sub-title"><svg class="ic"><use href="#down"/></svg>房顶</button>
                            <div class="sub-body">
                                <div class="prop"><label for="p9">房顶墙壁高度</label><input id="p9" type="text" value="1.200"><svg class="ic wide"><use href="#sheet"/></svg><i></i></div>
                                <div class="prop"><label for="p10">墙壁厚度</label><input id="p10" type="text" value="1.300"><svg class="ic wide"><use href="#sheet"/></svg><i></i></div>
                            </div>
                            <button class="sub-title"><svg class="ic"><use href="#right"/></svg>管理</button>
                        </div>
                    </div>
                </div>
            </section>
        </div>
    </main>

    <footer class="statusbar">
        <span><svg class="mouse"><use href="#mouse-l"/></svg>选择</span>
        <span><svg class="mouse"><use href="#mouse-m"/></svg>平移视图</span>
        <span><svg class="mouse"><use href="#mouse-r"/></svg>选项</span>
        <span class="stats">内存: 285.7 MiB | 显存: 2.8/4.0 GiB | 4.4.3</span>
    </footer>

    <!-- screencast keys -->
    <div class="keycast">
        <p>Wheel Down x4<br>Left Mouse<br>G<br>Left Mouse x3<br>Wheel Up x3</p>
        <svg width="36" height="46" viewBox="0 0 36 46"><path d="M1 14C1 4 4 1 10 1h16c6 0 9 3 9 13v16c0 20-34 20-34 0zM1 23h34M12 1v22M23 1v22" fill="none" stroke="#fff" stroke-width="1.500"/></svg>
        <p class="operator">选择 ('node.select')</p>
    </div>
    <div class="watermark"><svg width="40" height="38" viewBox="0 0 40 38"><path d="M6 0h28q6 0 6 6v26q0 6-6 6H6q-6 0-6-6V6q0-6 6-6zM13 9v15q8 10 15 0v-4l-6-5-5 3z" fill="#fff" fill-rule="evenodd"/></svg>tafe.cc</div>
    <div class="subtitle">让我们来制作这个……</div>

    <script>
        const sheetRows = document.getElementById('sheetRows');
        for (let i = 0; i < 16; i++) {
            const row = document.createElement('tr');
            row.innerHTML = `<td class="col-index">${i}</td>
                <td class="col-sharp"><input type="checkbox" aria-label="sharp_face ${i}"></td>
                <td class="col-mat">0</td>
                <td class="col-wall"><input type="checkbox" checked aria-label="外墙 ${i}"></td><td></td>`;
            sheetRows.appendChild(row);
        }
    </script>
</body>
</html>
```

FILE: styles.css
```css
:root {
    --window: #181818;
    --header: #2e2e2e;
    --panel: #3d3d3d;
    --list: #282828;
    --dark: #1d1d1d;
    --field: #545454;
    --accent: #4772b3;
    --line: #3a3a3a;
    --text: #e0e0e0;
    --text-dim: #9a9a9a;
}

* {
    box-sizing: border-box;
}

body {
    margin: 0;
    height: 100vh;
    display: flex;
    flex-direction: column;
    overflow: hidden;
    background: var(--window);
    color: var(--text);
    font-family: Inter, "Noto Sans CJK SC", sans-serif;
    font-size: 12px;
    line-height: 16px;
}

button, input, select {
    font: inherit;
    color: inherit;
    border: none;
    background: none;
    padding: 0;
    margin: 0;
    min-width: 0;
    outline: none;
}

button {
    display: flex;
    align-items: center;
    white-space: nowrap;
}

select {
    appearance: none;
    width: 100%;
}

p, ul {
    margin: 0;
    padding: 0;
    list-style: none;
}

svg {
    flex: none;
}

.sprite {
    position: absolute;
}

.lat {
    font-size: 13px;
}

.ic {
    width: 16px;
    height: 16px;
}

.ic.wide {
    width: 18px;
}

.chev {
    width: 14px;
    height: 14px;
}

.dim {
    opacity: 0.45;
}

.soft {
    opacity: 0.7;
}

.push {
    margin-left: auto;
}

.orange {
    color: #d0864c;
}

.green {
    color: #1fb583;
}

.red {
    color: #b8506a;
}

.blue {
    color: #6c8bd8;
}

/* title and top bar */
.titlebar {
    display: flex;
    align-items: center;
    height: 22px;
    padding: 0 12px 0 4px;
    gap: 5px;
}

.logo {
    color: #e0893a;
}

.title {
    font-family: Lato, "Noto Sans CJK SC", sans-serif;
    color: #fff;
}

.window-buttons {
    display: flex;
    gap: 33px;
    margin-left: auto;
    padding-right: 8px;
}

.window-buttons svg {
    width: 12px;
    height: 12px;
}

.topbar {
    display: flex;
    align-items: center;
    height: 29px;
    padding: 0 7px 0 9px;
}

.topbar > .menus {
    margin-left: 10px;
}

.menus {
    display: flex;
    gap: 17px;
}

.tabs {
    display: flex;
    align-self: flex-end;
    margin-left: 26px;
}

.tabs button {
    height: 22px;
    padding: 0 11px;
    color: var(--text-dim);
}

.tabs .active {
    background: #303030;
    border-radius: 4px 4px 0 0;
    color: #fff;
}

.tabs .lat {
    font-size: 12px;
    padding: 0 12px;
}

.add-tab {
    margin-left: 2px;
}

.lang {
    justify-content: center;
    width: 48px;
    height: 22px;
    margin-left: 8px;
    border-radius: 4px;
    background: #4a4a4a;
}

.datablocks {
    display: flex;
    gap: 5px;
    margin-left: auto;
}

.datablock {
    display: flex;
    align-items: center;
    width: 188px;
    height: 21px;
    border-radius: 4px;
    background: var(--dark);
    box-shadow: 0 0 0 1px #333;
    overflow: hidden;
}

.datablock.layer {
    width: 168px;
}

.datablock input {
    flex: 1;
    padding-left: 8px;
}

.datablock > .dim {
    margin-right: 6px;
}

/* shared header controls */
.bar {
    display: flex;
    align-items: center;
    flex: none;
    height: 27px;
    padding: 0 8px;
    gap: 8px;
    background: var(--header);
}

.bar.spread {
    justify-content: space-between;
}

.group, .joined {
    display: flex;
    align-items: center;
}

.group {
    gap: 8px;
}

.drop {
    justify-content: center;
    height: 20px;
    min-width: 33px;
    border-radius: 4px;
    background: #282828;
}

.drop.slim {
    min-width: 20px;
}

.tool {
    justify-content: center;
    width: 21px;
    height: 21px;
    background: #4a4a4a;
}

.datablock .tool {
    width: 22px;
}

.tool.on {
    background: var(--accent);
    color: #fff;
}

.off {
    background: #333;
    color: #555;
}

.wide-drop {
    gap: 7px;
    padding: 0 8px;
}

.flat {
    gap: 4px;
}

.select {
    position: relative;
    display: flex;
    align-items: center;
    flex: none;
    gap: 8px;
    height: 20px;
    padding-left: 5px;
    border-radius: 4px;
    background: #282828;
}

.select .chev {
    position: absolute;
    right: 2px;
}

.mode {
    width: 93px;
}

.bar .menus {
    margin-left: 5px;
}

.area {
    display: flex;
    flex-direction: column;
    min-width: 0;
    min-height: 0;
    border: 1px solid var(--line);
    border-radius: 6px;
    overflow: hidden;
    background: var(--header);
}

.crumbs {
    display: flex;
    align-items: center;
    gap: 10px;
    white-space: nowrap;
}

.sep {
    width: 14px;
    height: 14px;
    margin: 0 5px;
}

.node-canvas .sep, .prop-main .sep {
    margin-right: -3px;
}

.search {
    display: flex;
    align-items: center;
    gap: 8px;
    width: 127px;
    height: 21px;
    padding-left: 5px;
    border-radius: 4px;
    background: var(--dark);
}

.search input {
    width: 80px;
}

.search input::placeholder {
    color: #777;
}

input[type="checkbox"] {
    appearance: none;
    position: relative;
    width: 12px;
    height: 12px;
    border: 1px solid #777;
    border-radius: 1px;
}

input[type="checkbox"]:checked {
    border-color: #e0e0e0;
    background: #e0e0e0;
}

input[type="checkbox"]:checked::after {
    content: "";
    position: absolute;
    left: 1px;
    top: 1px;
    width: 7px;
    height: 4px;
    border-left: 2px solid #222;
    border-bottom: 2px solid #222;
    transform: rotate(-45deg);
}

/* workspace split */
.workspace {
    flex: 1;
    min-height: 0;
    display: grid;
    grid-template-columns: minmax(0, 1471fr) minmax(0, 445fr);
    gap: 3px;
    padding: 1px 1px 0 0;
}

.column-main {
    display: grid;
    grid-template-rows: minmax(0, 429fr) minmax(0, 541fr) 27px;
    gap: 3px;
    min-height: 0;
}

.row-top {
    display: grid;
    grid-template-columns: minmax(0, 963fr) minmax(0, 505fr);
    gap: 3px;
}

.row-nodes {
    display: grid;
    grid-template-columns: minmax(0, 166fr) minmax(0, 1302fr);
    gap: 3px;
}

.column-side {
    display: grid;
    grid-template-rows: minmax(0, 381fr) minmax(0, 619fr);
    gap: 3px;
    min-height: 0;
}

/* viewport */
.settings {
    gap: 7px;
    padding-left: 13px;
    white-space: nowrap;
}

.pencil {
    width: 26px;
    height: 20px;
}

.swatch {
    width: 71px;
    height: 20px;
    margin-left: 2px;
    border-radius: 4px 0 0 4px;
    background: #67a3c9;
}

.note {
    width: 63px;
    margin-left: -2px;
}

.place {
    width: 108px;
}

.check-label {
    display: flex;
    align-items: center;
    gap: 3px;
}

input.box-check {
    width: 16px;
    height: 16px;
    border: none;
    border-radius: 3px;
    background: #484848;
}

.slider {
    display: flex;
    align-items: center;
    justify-content: space-between;
    width: 123px;
    height: 20px;
    padding: 0 14px 0 18px;
    border-radius: 4px;
    color: #8c8c8c;
}

.slider input {
    width: 50px;
    text-align: right;
}

.radius {
    margin-left: 17px;
    background: linear-gradient(to right, #3d5578 33%, #424242 33%);
}

.factor {
    margin-left: 4px;
    background: linear-gradient(to right, #3d5578 75%, #424242 75%);
}

.drag {
    width: 50px;
    margin-left: 3px;
}

.settings label[for="drag"] {
    margin-left: 5px;
}

.options {
    width: 50px;
    margin-left: 16px;
}

.scene {
    position: relative;
    flex: 1;
    min-height: 0;
}

.scene-art {
    position: absolute;
    width: 100%;
    height: 100%;
}

.view-info {
    position: absolute;
    left: 10px;
    top: 9px;
    line-height: 20px;
    color: #fff;
    text-shadow: 0 0 2px #000;
}

.edge-mark {
    position: absolute;
    left: -4px;
    top: 18px;
    width: 12px;
    height: 12px;
}

.nav-gizmo {
    position: absolute;
    right: 3px;
    top: 16px;
}

.nav-tools {
    position: absolute;
    right: 10px;
    top: 101px;
    display: flex;
    flex-direction: column;
    gap: 4px;
}

.nav-tools button {
    justify-content: center;
    width: 29px;
    height: 29px;
    border-radius: 50%;
    background: rgba(40, 40, 40, 0.35);
}

.nav-tools svg {
    width: 20px;
    height: 20px;
}

/* spreadsheet */
.viewer-select {
    width: 94px;
}

.spreadsheet .bar {
    padding-right: 0;
    gap: 9px;
}

.spreadsheet .crumbs .soft {
    margin-left: 3px;
}

.clipped-toggle {
    width: 3px;
    height: 20px;
    margin-left: -6px;
    background: var(--accent);
}

.sheet-body {
    display: flex;
    flex: 1;
    min-height: 0;
}

.dataset {
    width: 168px;
    padding: 4px 3px 0 6px;
    border-right: 4px solid #393939;
    overflow: hidden;
    background: #282828;
}

.dataset button {
    width: 100%;
}

.panel-title {
    gap: 4px;
    height: 28px;
    background: #2e2e2e;
}

.panel-title .ic {
    margin-left: 2px;
}

.panel-title.second {
    margin-top: 5px;
}

.tree-item {
    gap: 10px;
    height: 20px;
    margin: 4px 0;
    padding: 0 5px 0 37px;
    border-radius: 3px;
}

.tree-item.root {
    margin-top: 8px;
    padding-left: 22px;
}

.tree-item span {
    margin-left: auto;
    color: #707070;
}

.tree-item.selected {
    background: var(--accent);
}

.tree-item.selected span {
    color: #9fb1d0;
}

.domain-tree {
    padding-top: 6px;
}

.tree-head {
    gap: 3px;
    height: 24px;
    padding-left: 3px;
}

.tree-head .ic + .ic {
    margin-right: 7px;
}

.branch {
    background: linear-gradient(#555, #555) 12px 0 / 1px 100% no-repeat;
}

.branch .tree-item {
    margin: 0 0 4px;
}

.branch .tree-item:first-child {
    margin-top: 2px;
}

.branch .tree-item:last-child {
    margin-bottom: 2px;
}

.table-wrap {
    flex: 1;
    min-width: 0;
    overflow: hidden;
    background: #282828;
}

table {
    width: 100%;
    table-layout: fixed;
    border-collapse: collapse;
}

th, td {
    height: 22px;
    padding: 0;
    border-right: 1px solid #202020;
    font-weight: 400;
    text-align: center;
}

th {
    height: 24px;
    background: #2c2c2c;
    color: #bdbdbd;
}

th.col-mat {
    font-size: 12px;
}

tbody tr:nth-child(even) {
    background: #2b2b2b;
}

th.col-index {
    width: 41px;
}

td.col-index {
    padding-right: 5px;
    background: #333;
    text-align: right;
}

.col-sharp {
    width: 85px;
}

.col-mat {
    width: 106px;
}

td.col-mat {
    padding-right: 5px;
    text-align: right;
}

.col-wall {
    width: 46px;
}

td input {
    display: block;
    margin: 0 auto;
}

.sheet-footer {
    height: 26px;
    padding-right: 9px;
    background: #2e2e2e;
    line-height: 25px;
    text-align: right;
}

/* shader editor */
.shader, .nodes, .shader .bar, .nodes .bar {
    background: var(--dark);
}

.shader .bar {
    padding-right: 3px;
}

.shader .menus {
    margin-left: 3px;
    overflow: hidden;
}

.shader-type {
    width: 91px;
}

.shader-canvas {
    position: relative;
    flex: 1;
}

.shader-canvas .crumbs, .node-canvas .crumbs {
    position: absolute;
    left: -10px;
    top: 15px;
    gap: 8px;
}

.shader-canvas .sep {
    margin: 0 -4px 0 4px;
}

.shader-canvas .sep.last {
    margin-left: 12px;
    margin-right: -10px;
}

.links {
    position: absolute;
    width: 100%;
    height: 100%;
}

.bsdf-node {
    position: absolute;
    left: -30px;
    top: 86px;
    width: 130px;
    height: 146px;
    padding-right: 10px;
    background: #303030;
    font-size: 11px;
    box-shadow: 0 2px 8px #000;
}

.node-title {
    margin-right: -10px;
    padding-left: 20px;
    background: #2f6f30;
}

.node-out {
    padding: 5px 0 5px;
    text-align: right;
}

.bsdf-node .select {
    padding-left: 16px;
}

.node-field {
    display: flex;
    align-items: center;
    height: 17px;
    margin-top: 3px;
    padding: 0 12px 0 26px;
    border-radius: 3px;
    background: #505050;
    white-space: nowrap;
}

.bsdf-node .select + .node-field {
    margin-top: 20px;
}

.node-field input {
    flex: 1;
    text-align: right;
}

.hscroll {
    position: absolute;
    left: 76px;
    bottom: 2px;
    width: 42px;
    height: 3px;
    background: #333;
}

.vscroll {
    position: absolute;
    right: 1px;
    top: 0;
    bottom: 15px;
    width: 4px;
    border-radius: 2px;
    background: #333;
}

.vscroll.mid {
    top: 50%;
    bottom: 26%;
}

/* node editor */
.tree-type {
    width: 71px;
    padding-left: 6px;
}

.nodes .drop, .nodes .select, .shader .drop, .shader .select {
    background: #252525;
}

.nodes .bar .menus + .datablock {
    flex: none;
    width: 238px;
    margin-left: 220px;
}

.nodes-body {
    display: flex;
    flex: 1;
    min-height: 0;
}

.node-canvas {
    position: relative;
    flex: 1;
    min-width: 0;
    overflow: hidden;
}

.graph {
    position: absolute;
    width: 100%;
    height: 100%;
}

.node-canvas .crumbs {
    left: -7px;
    gap: 10px;
}

.interface {
    display: flex;
    flex-direction: column;
    width: 426px;
    padding: 0 13px 0 17px;
    background: var(--panel);
}

.interface-title {
    display: flex;
    align-items: center;
    gap: 2px;
    height: 32px;
    margin: 0 0 7px -4px;
    color: #fff;
}

.grip {
    margin-left: auto;
    opacity: 0.6;
}

.interface-body {
    display: flex;
    flex: 1;
    gap: 10px;
}

.sockets {
    flex: 1;
    padding: 4px 13px 0 6px;
    background: #2b2b2b;
}

.sockets li {
    position: relative;
    display: flex;
    align-items: center;
    height: 20px;
    margin-bottom: 4px;
    padding-left: 42px;
}

.sockets li.folder {
    padding-left: 2px;
    border-radius: 3px;
}

.folder .ic {
    margin-right: 2px;
}

.sockets li.child {
    padding-left: 57px;
}

.child::before {
    content: "";
    position: absolute;
    left: 12px;
    top: -2px;
    height: 24px;
    border-left: 1px solid #555;
}

.sockets .selected {
    background: var(--accent);
}

.dot {
    width: 9px;
    height: 9px;
    margin: 0 8px 0 -17px;
    border-radius: 50%;
    background: #a1a1a1;
}

.dot.int {
    background: #65906f;
}

.dot.geo {
    background: #1fe0a0;
}

.dot.end {
    margin: 0 11px 0 auto;
}

.list-buttons button {
    justify-content: center;
    width: 20px;
    height: 20px;
    background: #545454;
}

.list-buttons .dark {
    border-radius: 3px;
    background: #282828;
}

.list-buttons .more {
    margin-top: 9px;
}

.side-tabs {
    display: flex;
    flex-direction: column;
    gap: 4px;
    width: 27px;
    padding: 4px 3px 0 4px;
}

.side-tabs button {
    justify-content: flex-start;
    writing-mode: vertical-rl;
    text-orientation: sideways;
    width: 20px;
    padding: 8px 0;
    border: 1px solid #333;
    border-left: none;
    border-radius: 0 4px 4px 0;
}

.side-tabs .active {
    background: #303030;
}

/* timeline */
.timeline {
    flex-direction: row;
    align-items: center;
    justify-content: space-between;
    padding: 0 18px 0 8px;
}

.timeline .group {
    gap: 9px;
}

.timeline .drop {
    margin-right: 7px;
}

.playback {
    display: flex;
    align-items: center;
    gap: 6px;
    width: calc(56% + 8px);
}

.transport {
    display: flex;
    margin-left: 6px;
}

.field {
    height: 21px;
    border-radius: 4px;
    background: #4a4a4a;
    text-align: center;
}

.current {
    width: 87px;
}

.range {
    display: flex;
    align-items: center;
    width: 88px;
    padding: 0 8px;
}

.range input {
    width: 44px;
    text-align: right;
}

.bracket {
    justify-content: center;
    width: 37px;
}

/* outliner */
.outliner {
    background: #282828;
}

.outliner .bar {
    padding: 0 7px 0 6px;
    background: #2b2b2b;
}

.outliner .search {
    margin: 0 auto 0 58px;
}

.outliner-rows li {
    display: flex;
    align-items: center;
    height: 22px;
    padding-left: 23px;
}

.outliner-rows .top {
    gap: 7px;
}

.odd {
    background: #2b2b2b;
}

.outliner b {
    font-weight: 500;
    color: #fff;
}

.badge {
    position: relative;
    display: flex;
    align-items: center;
    justify-content: center;
    width: 22px;
    height: 20px;
    margin: 0 3px;
    border-radius: 4px;
    background: #444;
}

.badge.first {
    margin-left: 22px;
}

.badge em {
    position: absolute;
    left: 12px;
    top: 6px;
    font-size: 11px;
    font-style: normal;
    line-height: 12px;
    color: #ddd;
}

.badge.green {
    margin-left: 22px;
}

.obj {
    margin: 0 8px 0 5px;
}

.toggles {
    display: flex;
    align-items: center;
    gap: 6px;
    margin-left: auto;
    padding-right: 11px;
}

.toggles input {
    margin-right: 2px;
}

/* properties */
.properties .bar {
    height: 25px;
}

.properties .search {
    margin: 0 auto;
}

.props-body {
    display: flex;
    flex: 1;
    min-height: 0;
}

.prop-tabs {
    width: 30px;
    padding-top: 8px;
    background: var(--dark);
}

.prop-tabs button {
    justify-content: center;
    width: 30px;
    height: 30px;
}

.prop-tabs .gap {
    margin-bottom: 8px;
}

.prop-tabs .active {
    background: #2e2e2e;
}

.prop-main {
    flex: 1;
    min-width: 0;
    padding: 7px 8px 0 8px;
}

.prop-main .crumbs {
    height: 24px;
    padding: 0 4px 0 2px;
}

.add-modifier {
    width: 100%;
    height: 21px;
    margin: 16px 0 11px;
    padding-left: 4px;
    border-radius: 4px;
    background: var(--field);
}

.add-modifier span {
    flex: 1;
    text-align: center;
}

.modifier {
    border: 1px solid #4f6d9e;
    border-radius: 4px;
    background: var(--panel);
}

.modifier-head {
    display: flex;
    align-items: center;
    gap: 8px;
    height: 24px;
    padding: 0 7px 0 5px;
}

.modifier-head > .ic:first-child {
    margin-right: -3px;
}

.modifier-head input {
    flex: 1;
    height: 20px;
    padding-left: 8px;
    border-radius: 4px 0 0 4px;
    background: var(--dark);
}

.modifier-head .joined {
    margin-left: -8px;
}

.modifier-head .tool {
    width: 22px;
}

.modifier-head .grip {
    margin-left: 2px;
}

.group-block {
    width: auto;
    margin: 10px 8px 3px;
}

.prop {
    display: grid;
    grid-template-columns: 156px 1fr 22px 22px;
    align-items: center;
    height: 27px;
    padding-right: 8px;
}

.prop label {
    padding-right: 10px;
    text-align: right;
}

.prop input {
    width: 100%;
    height: 20px;
    border-radius: 3px;
    background: var(--field);
    font-size: 13px;
    text-align: center;
}

.prop svg {
    margin-left: 3px;
}

.prop i {
    width: 4px;
    height: 4px;
    margin: 0 auto;
    border-radius: 50%;
    background: #e0e0e0;
}

.sub-title {
    gap: 4px;
    width: 100%;
    height: 26px;
    padding: 0 9px;
}

.sub-body {
    padding: 3px 0 2px;
    background: #363636;
}

/* status bar and overlays */
.statusbar {
    display: flex;
    align-items: center;
    gap: 12px;
    height: 24px;
    padding: 0 13px 0 9px;
    color: #9a9a9a;
}

.statusbar span {
    display: flex;
    align-items: center;
    gap: 4px;
}

.mouse {
    width: 14px;
    height: 18px;
}

.statusbar .stats {
    margin-left: auto;
}

.keycast {
    position: absolute;
    left: 35px;
    bottom: 122px;
    color: #fff;
    font-size: 20px;
    line-height: 24px;
}

.keycast svg {
    display: block;
    margin: 8px 0;
}

.operator::before {
    content: "";
    display: block;
    width: 103px;
    margin-bottom: 9px;
    border-top: 2px solid #fff;
}

.watermark {
    position: absolute;
    left: 11px;
    bottom: 14px;
    display: flex;
    align-items: center;
    gap: 10px;
    opacity: 0.3;
    color: #fff;
    font-size: 36px;
    font-weight: 700;
    line-height: 38px;
}

.subtitle {
    position: absolute;
    left: 0;
    right: 0;
    bottom: 12px;
    padding-left: 50px;
    color: #fff;
    font-family: "Noto Sans CJK SC", sans-serif;
    font-size: 56px;
    font-weight: 500;
    line-height: 64px;
    text-align: center;
    -webkit-text-stroke: 1px #fff;
}
```
